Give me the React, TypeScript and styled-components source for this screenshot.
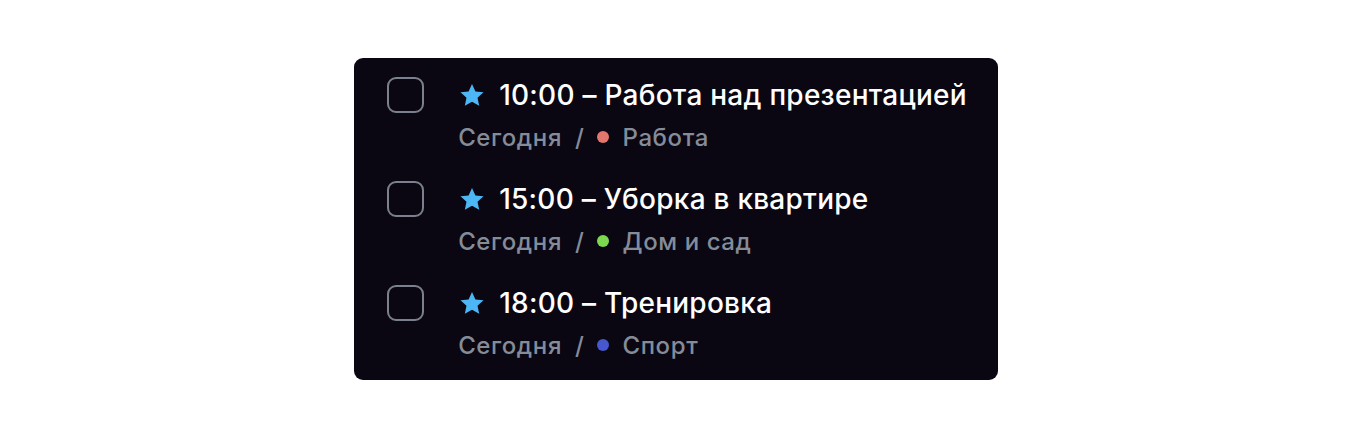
import React from "react";
import styled, { createGlobalStyle } from "styled-components";

const Global = createGlobalStyle`
  html, body { margin: 0; padding: 0; background: #ffffff; }
  body { font-family: Inter, "Noto Sans", sans-serif; }
`;

const Page = styled.div`
  width: 1352px;
  height: 438px;
  display: flex;
  align-items: center;
  justify-content: center;
`;

const Card = styled.div`
  background: #0a0713;
  border-radius: 9px;
  padding: 19px 31px 23px 33px;
  display: flex;
  flex-direction: column;
  gap: 32px;
`;

const Row = styled.div`
  display: flex;
  align-items: flex-start;
  gap: 34px;
`;

const Checkbox = styled.div`
  width: 37px;
  height: 36px;
  box-sizing: border-box;
  border: 2px solid #7b808d;
  border-radius: 9px;
  flex-shrink: 0;
`;

const Content = styled.div`
  display: flex;
  flex-direction: column;
  gap: 12px;
`;

const Title = styled.div`
  display: flex;
  align-items: center;
  gap: 13px;
  height: 36px;
  color: #ffffff;
  font-size: 28px;
  font-weight: 500;
  letter-spacing: 0.25px;
  white-space: nowrap;
`;

const Meta = styled.div`
  display: flex;
  align-items: center;
  height: 24px;
  color: #858c99;
  font-size: 24px;
  font-weight: 500;
  letter-spacing: 0.6px;
  white-space: nowrap;
`;

const Slash = styled.span`
  margin: 0 13px 0 13px;
`;

const Dot = styled.span<{ $color: string }>`
  width: 12px;
  height: 12px;
  border-radius: 50%;
  background: ${(p) => p.$color};
  margin-right: 13px;
`;

const Star = () => (
  <svg width="28" height="27" viewBox="0 0 24 24" aria-hidden>
    <path
      d="M12 1.8l3.05 6.6 7.2.8-5.35 4.9 1.5 7.1L12 17.6l-6.4 3.6 1.5-7.1L1.75 9.2l7.2-.8z"
      fill="#4db6f4"
    />
  </svg>
);

const tasks = [
  { title: "10:00 – Работа над презентацией", cat: "Работа", color: "#e3776e" },
  { title: "15:00 – Уборка в квартире", cat: "Дом и сад", color: "#7bd84f" },
  { title: "18:00 – Тренировка", cat: "Спорт", color: "#4757cf" },
];

export default function App() {
  return (
    <>
      <Global />
      <Page>
        <Card>
          {tasks.map((t) => (
            <Row key={t.title}>
              <Checkbox />
              <Content>
                <Title>
                  <Star />
                  <span>{t.title}</span>
                </Title>
                <Meta>
                  <span>Сегодня</span>
                  <Slash>/</Slash>
                  <Dot $color={t.color} />
                  <span>{t.cat}</span>
                </Meta>
              </Content>
            </Row>
          ))}
        </Card>
      </Page>
    </>
  );
}
